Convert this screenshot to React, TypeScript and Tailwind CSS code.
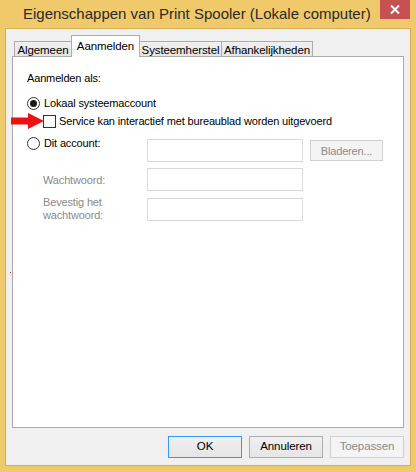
import React from "react"

const ui = { fontFamily: '"Liberation Sans", Arial, sans-serif' }

function Radio({ checked }: { checked?: boolean }) {
  return (
    <span className="flex h-[13px] w-[13px] shrink-0 items-center justify-center rounded-full border border-[#333] bg-white">
      {checked && <span className="h-[7px] w-[7px] rounded-full bg-[#1a1a1a]" />}
    </span>
  )
}

function TextBox() {
  return <div className="h-[23px] w-[156px] border border-[#d9d9d9] bg-white" />
}

function Button({ label, kind }: { label: string; kind: "default" | "normal" | "disabled" }) {
  const cls =
    kind === "default"
      ? "border-[#3399ff] bg-gradient-to-b from-[#f0f0f0] to-[#e5e5e5] text-black"
      : kind === "normal"
        ? "border-[#acacac] bg-gradient-to-b from-[#f0f0f0] to-[#e5e5e5] text-black"
        : "border-[#d0d0d0] bg-[#f4f4f4] text-[#8a8a8a]"
  return (
    <div className={`flex h-[22px] w-[74px] items-center justify-center border text-[11.5px] tracking-[-0.1px] ${cls}`}>
      {label}
    </div>
  )
}

export default function App() {
  const tabs = [
    { name: "Algemeen", w: "w-[57px]", extra: "border-l" },
    { name: "Aanmelden", w: "w-[69px]", selected: true },
    { name: "Systeemherstel", w: "w-[82px]", extra: "border-r" },
    { name: "Afhankelijkheden", w: "w-[91px]", extra: "border-r" },
  ]

  return (
    <div className="relative flex h-[472px] w-[416px] flex-col bg-[#f0c96a] text-black" style={ui}>
      {/* title bar */}
      <div className="flex h-[28px] items-start">
        <div className="whitespace-nowrap pl-[23px] pt-[4px] text-[15px] leading-[20px] text-[#2a2a2a]">
          Eigenschappen van Print Spooler (Lokale computer)
        </div>
        <div className="ml-auto mr-[6px] flex h-[19px] w-[30px] shrink-0 items-center justify-center bg-[#c75050]">
          <svg width="10" height="9" viewBox="0 0 10 9">
            <path d="M1 0.5 L9 8.5 M9 0.5 L1 8.5" stroke="#fff" strokeWidth="2" />
          </svg>
        </div>
      </div>

      {/* client */}
      <div className="mx-[5px] flex h-[438px] flex-col border border-[#d6ae58] bg-[#f0f0f0]">
        <div className="mx-[6px] mt-[7px] flex flex-col">
          <div className="ml-[2px] flex h-[20px] items-end text-[11.5px] tracking-[-0.1px]">
            {tabs.map((t) =>
              t.selected ? (
                <div
                  key={t.name}
                  className={`relative z-10 -mb-px flex h-[22px] ${t.w} items-start justify-center whitespace-nowrap border-x border-t border-[#acacac] bg-white pt-[3px] leading-[14px]`}
                >
                  {t.name}
                </div>
              ) : (
                <div
                  key={t.name}
                  className={`flex h-[15px] ${t.w} items-center justify-center whitespace-nowrap border-t ${t.extra} border-[#acacac] bg-gradient-to-b from-[#f0f0f0] to-[#e5e5e5] pt-px leading-[14px]`}
                >
                  {t.name}
                </div>
              )
            )}
          </div>

          <div className="flex h-[372px] flex-col border border-[#acacac] bg-white pl-[14px] text-[11px] leading-[14px] tracking-[-0.15px]">
            <div className="mt-[14px]">Aanmelden als:</div>

            <div className="mt-[11px] flex items-center gap-[4px]">
              <Radio checked />
              <span>Lokaal systeemaccount</span>
            </div>

            <div className="ml-[16px] mt-[4px] flex items-center gap-[3px]">
              <span className="h-[13px] w-[13px] shrink-0 border border-[#333] bg-white" />
              <span className="whitespace-nowrap">Service kan interactief met bureaublad worden uitgevoerd</span>
            </div>

            <div className="mt-[11px] flex items-start">
              <div className="-mt-[3px] flex w-[120px] items-center gap-[4px]">
                <Radio />
                <span>Dit account:</span>
              </div>
              <TextBox />
              <div className="ml-[7px] mt-px flex h-[21px] w-[73px] items-center justify-center border border-[#d0d0d0] bg-[#f4f4f4] text-[#8a8a8a]">
                Bladeren...
              </div>
            </div>

            <div className="mt-[6px] flex items-center">
              <div className="w-[120px] pl-[16px] text-[#8a8a8a]">Wachtwoord:</div>
              <TextBox />
            </div>

            <div className="mt-[5px] flex items-center">
              <div className="w-[120px] pl-[16px] leading-[13px] text-[#8a8a8a]">
                Bevestig het
                <br />
                wachtwoord:
              </div>
              <TextBox />
            </div>
          </div>
        </div>

        <div className="mr-[6px] mt-[8px] flex justify-end gap-[7px]">
          <Button label="OK" kind="default" />
          <Button label="Annuleren" kind="normal" />
          <Button label="Toepassen" kind="disabled" />
        </div>
      </div>

      {/* red arrow pointing at the checkbox */}
      <svg className="absolute left-[11px] top-[113px]" width="33" height="16" viewBox="0 0 33 16">
        <path d="M0 4.5 H17 V0 L33 8 L17 16 V11.5 H0 Z" fill="#ee1111" />
      </svg>
      <span className="absolute left-[10px] top-[272px] h-px w-px bg-[#e02020]" />
    </div>
  )
}
